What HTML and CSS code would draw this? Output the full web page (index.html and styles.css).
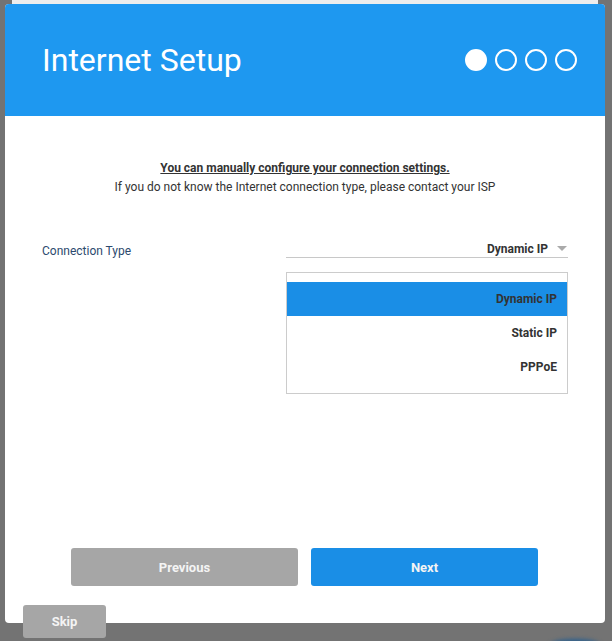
FILE: index.html
```html
<!DOCTYPE html>
<html lang="en">

<head>
    <meta charset="UTF-8">
    <meta name="viewport" content="width=device-width, initial-scale=1.0">
    <title>Internet Setup</title>
    <link rel="stylesheet" href="styles.css">
</head>

<body>
    <div class="behind"></div>

    <div class="modal">
        <div class="modal-header">
            <h1 class="title">Internet Setup</h1>
            <div class="steps">
                <span class="step active"></span>
                <span class="step"></span>
                <span class="step"></span>
                <span class="step"></span>
            </div>
        </div>

        <div class="modal-body">
            <p class="intro-strong">You can manually configure your connection settings.</p>
            <p class="intro">If you do not know the Internet connection type, please contact your ISP</p>

            <div class="field">
                <label class="field-label">Connection Type</label>
                <div class="field-control">
                    <div class="select">
                        <span class="select-value">Dynamic IP</span>
                        <span class="select-arrow"></span>
                    </div>
                    <ul class="options">
                        <li class="option selected">Dynamic IP</li>
                        <li class="option">Static IP</li>
                        <li class="option">PPPoE</li>
                    </ul>
                </div>
            </div>
        </div>

        <div class="modal-footer">
            <button class="btn btn-grey">Previous</button>
            <button class="btn btn-blue">Next</button>
        </div>
    </div>

    <button class="btn btn-grey skip">Skip</button>
    <div class="glow"></div>
</body>

</html>
```

FILE: styles.css
```css
* {
    padding: 0;
    margin: 0;
    box-sizing: border-box;
}

body {
    background-color: #737373;
    font-family: Roboto, "Liberation Sans", sans-serif;
    width: 612px;
    height: 641px;
    overflow: hidden;
    position: relative;
}

.behind {
    height: 4px;
    margin: 0 14px 0 12px;
    background-color: #ededed;
}

.modal {
    width: 600px;
    height: 619px;
    margin-left: 5px;
    background-color: #fff;
    border-radius: 4px;
    overflow: hidden;
    display: flex;
    flex-direction: column;
}

.modal-header {
    height: 112px;
    background-color: #1e98f0;
    display: flex;
    align-items: center;
    justify-content: space-between;
    padding: 0 28px 0 37px;
}

.title {
    color: #fff;
    font-size: 32px;
    font-weight: 400;
    margin-top: 0;
}

.steps {
    display: flex;
    gap: 8px;
}

.step {
    width: 22px;
    height: 22px;
    border: 2px solid #fff;
    border-radius: 50%;
}

.step.active {
    background-color: #fff;
}

.modal-body {
    flex: 1;
    padding-top: 43px;
}

.intro-strong,
.intro {
    text-align: center;
    font-size: 12px;
    color: #333;
    line-height: 19px;
}

.intro-strong {
    font-weight: 700;
    text-decoration: underline;
}

.field {
    display: flex;
    margin-top: 43px;
    padding: 0 37px;
}

.field-label {
    flex: 1;
    font-size: 12px;
    line-height: 14px;
    color: #2c4a6e;
    padding-top: 4px;
}

.field-control {
    width: 282px;
}

.select {
    height: 18px;
    border-bottom: 1px solid #c8c8c8;
    display: flex;
    align-items: center;
    justify-content: flex-end;
    gap: 9px;
    padding-right: 1px;
    font-size: 12px;
    line-height: 14px;
    font-weight: 700;
    color: #333;
}

.select-arrow {
    width: 0;
    height: 0;
    border-left: 5px solid transparent;
    border-right: 5px solid transparent;
    border-top: 5px solid #aaa;
}

.options {
    list-style: none;
    margin-top: 14px;
    border: 1px solid #ccc;
    padding: 9px 0;
}

.option {
    height: 34px;
    line-height: 34px;
    text-align: right;
    padding-right: 10px;
    font-size: 12px;
    font-weight: 700;
    color: #333;
}

.option.selected {
    background-color: #1a8ee6;
}

.modal-footer {
    display: flex;
    justify-content: center;
    gap: 13px;
    padding-bottom: 37px;
    padding-right: 1px;
}

.btn {
    width: 227px;
    height: 38px;
    border: none;
    border-radius: 3px;
    color: #f4f4f4;
    font-family: Roboto, "Liberation Sans", sans-serif;
    font-size: 13px;
    font-weight: 700;
}

.btn-grey {
    background-color: #a6a6a6;
}

.btn-blue {
    background-color: #1a8ee6;
}

.skip {
    position: absolute;
    left: 23px;
    top: 605px;
    width: 83px;
    height: 33px;
}

.glow {
    position: absolute;
    left: 550px;
    top: 639px;
    width: 50px;
    height: 12px;
    border-radius: 50%;
    background-color: #2a5f8f;
    filter: blur(2px);
}
```
